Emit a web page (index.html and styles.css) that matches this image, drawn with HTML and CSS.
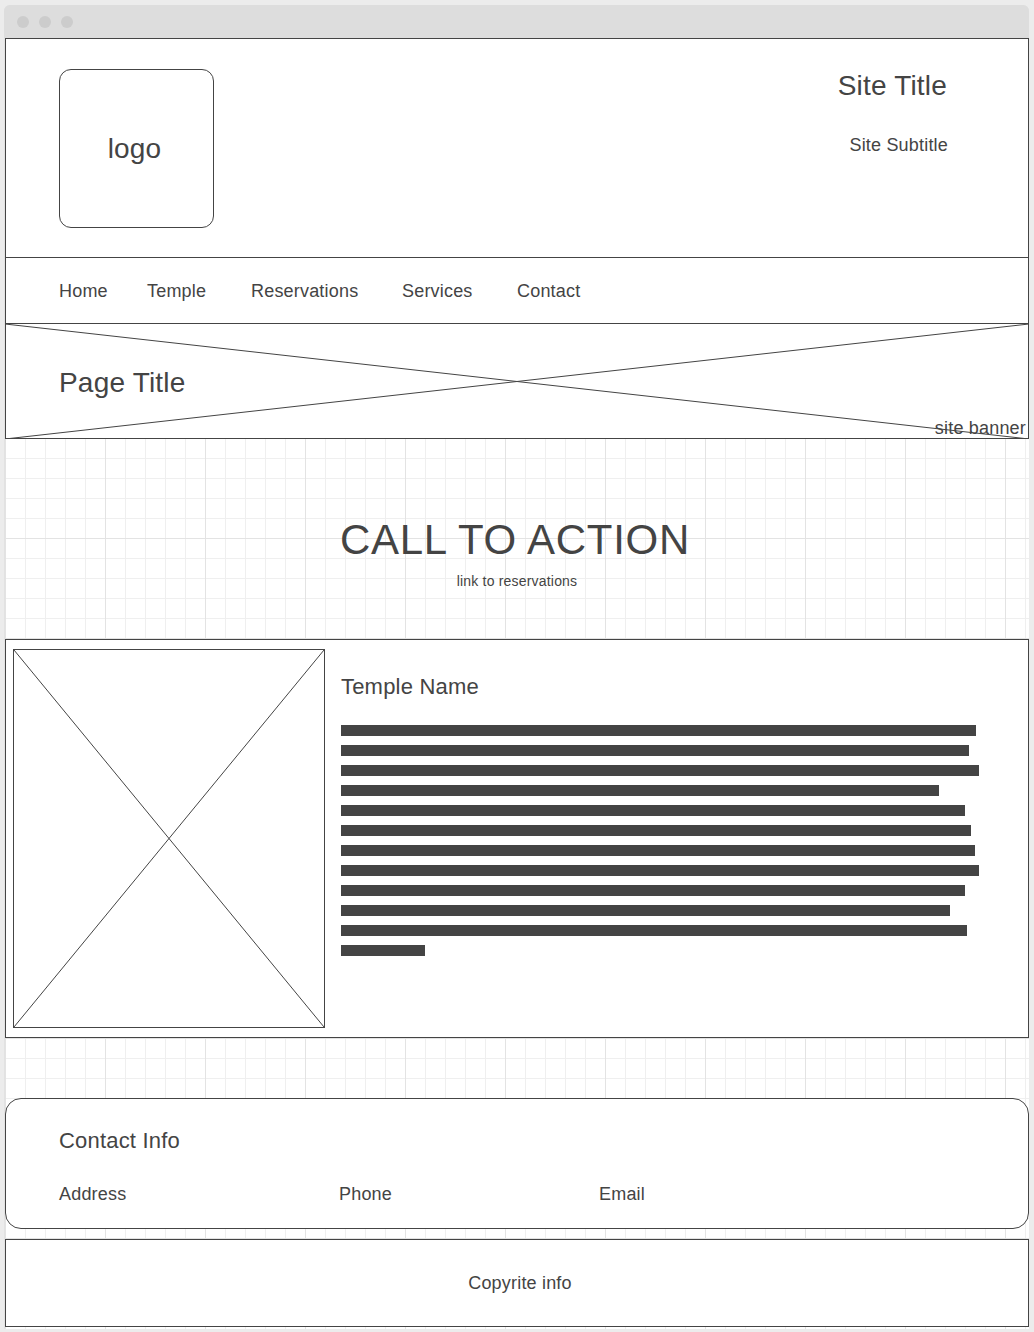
FILE: index.html
```html
<!DOCTYPE html>
<html lang="en">
<head>
<meta charset="utf-8">
<title>Temple Site Wireframe</title>
<link rel="stylesheet" href="styles.css">
</head>
<body>
<div class="window">
  <div class="titlebar">
    <span class="dot"></span><span class="dot"></span><span class="dot"></span>
  </div>
  <div class="page">
    <header class="site-header">
      <div class="logo">logo</div>
      <div class="site-id">
        <div class="site-title">Site Title</div>
        <div class="site-subtitle">Site Subtitle</div>
      </div>
    </header>

    <nav class="main-nav">
      <a class="nav-link">Home</a>
      <a class="nav-link">Temple</a>
      <a class="nav-link">Reservations</a>
      <a class="nav-link">Services</a>
      <a class="nav-link">Contact</a>
    </nav>

    <section class="banner">
      <svg class="xmark banner-x" preserveAspectRatio="none">
        <line x1="0" y1="0" x2="100%" y2="100%"/>
        <line x1="0" y1="100%" x2="100%" y2="0"/>
      </svg>
      <h1 class="page-title">Page Title</h1>
      <span class="banner-label">site banner</span>
    </section>

    <section class="cta">
      <h2 class="cta-title">CALL TO ACTION</h2>
      <a class="cta-link">link to reservations</a>
    </section>

    <section class="temple">
      <div class="temple-photo">
        <svg class="xmark" preserveAspectRatio="none">
          <line x1="0" y1="0" x2="100%" y2="100%"/>
          <line x1="0" y1="100%" x2="100%" y2="0"/>
        </svg>
      </div>
      <div class="temple-body">
        <h3 class="temple-name">Temple Name</h3>
        <div class="text-lines">
          <span class="text-line" style="width:635px"></span>
          <span class="text-line" style="width:628px"></span>
          <span class="text-line" style="width:638px"></span>
          <span class="text-line" style="width:598px"></span>
          <span class="text-line" style="width:624px"></span>
          <span class="text-line" style="width:630px"></span>
          <span class="text-line" style="width:634px"></span>
          <span class="text-line" style="width:638px"></span>
          <span class="text-line" style="width:624px"></span>
          <span class="text-line" style="width:609px"></span>
          <span class="text-line" style="width:626px"></span>
          <span class="text-line" style="width:84px"></span>
        </div>
      </div>
    </section>

    <section class="contact">
      <h3 class="contact-title">Contact Info</h3>
      <div class="contact-row">
        <span class="contact-item">Address</span>
        <span class="contact-item">Phone</span>
        <span class="contact-item">Email</span>
      </div>
    </section>

    <footer class="site-footer">Copyrite info</footer>
  </div>
</div>
</body>
</html>
```

FILE: styles.css
```css
* {
  box-sizing: border-box;
}

html, body {
  margin: 0;
  padding: 0;
}

body {
  background: #ececec;
  font-family: "Liberation Sans", Arial, Helvetica, sans-serif;
  color: #444444;
  letter-spacing: 0.012em;
}

h1, h2, h3 {
  margin: 0;
  font-weight: normal;
}

a {
  color: inherit;
  text-decoration: none;
}

.window {
  margin: 5px 0 0 4px;
  width: 1025px;
  background: #e2e2e2;
  border-radius: 6px 6px 0 0;
}

.titlebar {
  height: 33px;
  background: #dddddd;
  border-radius: 6px 6px 0 0;
  display: flex;
  align-items: center;
  gap: 10px;
  padding-left: 13px;
}

.dot {
  width: 12px;
  height: 12px;
  border-radius: 50%;
  background: #cccccc;
}

.page {
  margin-left: 1px;
  width: 1024px;
  padding-bottom: 2px;
  background-color: #ffffff;
  background-image:
    linear-gradient(to right, #e3e3e3 1px, transparent 1px),
    linear-gradient(to bottom, #e3e3e3 1px, transparent 1px),
    linear-gradient(to right, #efefef 1px, transparent 1px),
    linear-gradient(to bottom, #efefef 1px, transparent 1px);
  background-size: 100px 100px, 100px 100px, 20px 20px, 20px 20px;
  background-position: 0 0;
}

/* Header */
.site-header {
  height: 220px;
  background: #fff;
  border: 1px solid #444;
  display: flex;
  justify-content: space-between;
  align-items: flex-start;
  padding: 30px 80px 0 53px;
}

.logo {
  width: 155px;
  height: 159px;
  border: 1px solid #444;
  border-radius: 12px;
  display: flex;
  align-items: center;
  justify-content: center;
  font-size: 28px;
  padding-right: 4px;
}

.site-id {
  text-align: right;
  padding-top: 1px;
}

.site-title {
  font-size: 28px;
  line-height: 32px;
  margin-right: 1px;
}

.site-subtitle {
  font-size: 18px;
  line-height: 21px;
  margin-top: 33px;
}

/* Nav */
.main-nav {
  height: 66px;
  background: #fff;
  border: 1px solid #444;
  border-top: 0;
  display: grid;
  grid-template-columns: 88px 104px 151px 115px auto;
  align-items: center;
  padding: 1px 0 0 53px;
  font-size: 18px;
}

/* Banner */
.banner {
  position: relative;
  height: 115px;
  background: #fff;
  border: 1px solid #444;
  border-top: 0;
  display: flex;
  align-items: center;
  padding: 3px 0 0 53px;
}

.xmark {
  display: block;
  width: 100%;
  height: 100%;
}

.xmark line {
  stroke: #444;
  stroke-width: 1;
}

.banner-x {
  position: absolute;
  top: 0;
  left: -1px;
  width: 1024px;
  height: 115px;
}

.page-title {
  position: relative;
  font-size: 28px;
}

.banner-label {
  position: absolute;
  right: 2px;
  bottom: -1px;
  font-size: 18px;
  line-height: 21px;
}

/* Call to action */
.cta {
  height: 200px;
  padding: 77px 4px 0 0;
  display: flex;
  flex-direction: column;
  align-items: center;
}

.cta-title {
  font-size: 42px;
  line-height: 48px;
  letter-spacing: 0.017em;
}

.cta-link {
  margin-top: 9px;
  font-size: 14px;
  line-height: 16px;
  padding-left: 4px;
}

/* Temple */
.temple {
  height: 399px;
  background: #fff;
  border: 1px solid #444;
  padding: 9px 7px;
  display: flex;
  gap: 16px;
}

.temple-photo {
  width: 312px;
  height: 379px;
  flex: none;
  border: 1px solid #444;
}

.temple-body {
  flex: 1;
}

.temple-name {
  margin-top: 25px;
  font-size: 22px;
  line-height: 25px;
}

.text-lines {
  margin-top: 26px;
  display: flex;
  flex-direction: column;
  gap: 9px;
}

.text-line {
  display: block;
  height: 11px;
  background: #444;
}

/* Contact */
.contact {
  margin-top: 60px;
  height: 131px;
  background: #fff;
  border: 1px solid #444;
  border-radius: 16px;
  padding: 29px 0 0 53px;
}

.contact-title {
  font-size: 22px;
  line-height: 25px;
}

.contact-row {
  margin-top: 31px;
  display: grid;
  grid-template-columns: 280px 260px auto;
  font-size: 18px;
  line-height: 21px;
}

/* Footer */
.site-footer {
  margin-top: 10px;
  height: 88px;
  background: #fff;
  border: 1px solid #444;
  display: flex;
  align-items: center;
  justify-content: center;
  padding-left: 6px;
  font-size: 18px;
}
```
